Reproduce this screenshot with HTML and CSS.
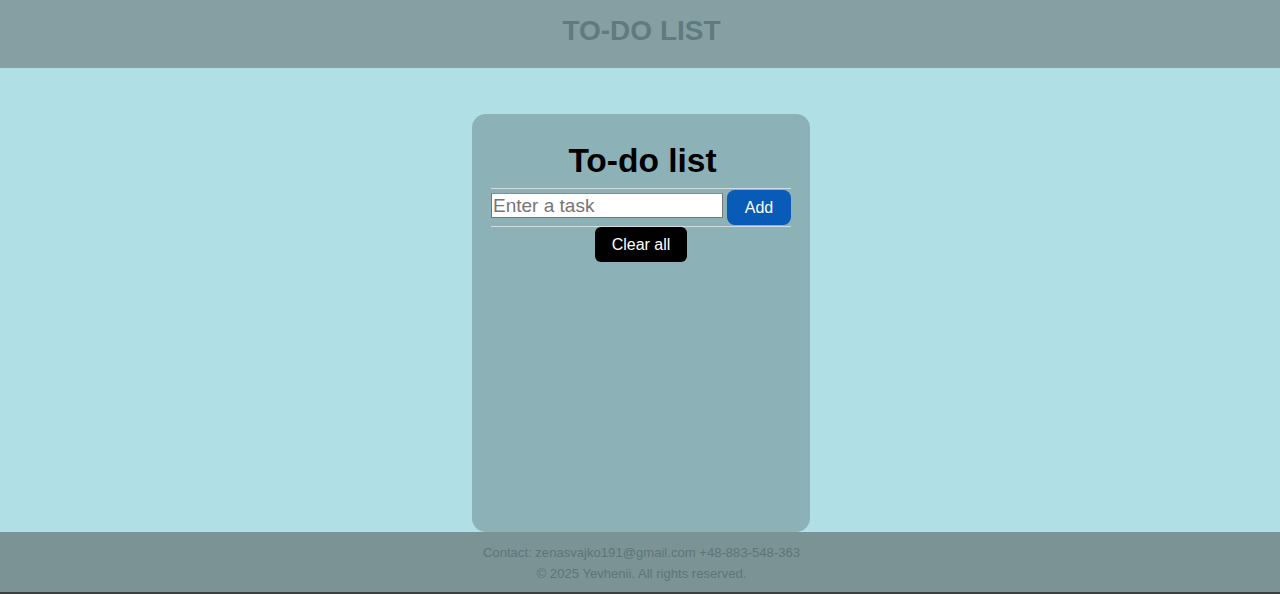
FILE: index.html
```html
<!DOCTYPE html>
<html lang="en">
<head>
<meta charset="UTF-8">
<title>To-do list</title>
<link rel="stylesheet" href="styles.css">
</head>
<body>
<header class="site-header">
  <h2 class="site-title">TO-DO LIST</h2>
</header>
<main class="main">
  <section class="card">
    <h1 class="card-title">To-do list</h1>
    <form class="task-form" onsubmit="return false;">
      <input class="task-input" type="text" placeholder="Enter a task">
      <button class="btn btn-add" type="submit">Add</button>
    </form>
    <button class="btn btn-clear" type="button">Clear all</button>
    <ul class="task-list"></ul>
  </section>
</main>
<footer class="site-footer">
  <p class="footer-line">Contact: zenasvajko191@gmail.com +48-883-548-363</p>
  <p class="footer-line">© 2025 Yevhenii. All rights reserved.</p>
</footer>
</body>
</html>
```
FILE: styles.css
```css
html, body {
  margin: 0;
  padding: 0;
}
body {
  font-family: "Liberation Sans", Arial, sans-serif;
  background: #b0dfe5;
  display: flex;
  flex-direction: column;
  height: 594px;
  box-sizing: border-box;
  border-bottom: 2px solid #3a3f40;
}
.site-header {
  height: 68px;
  box-sizing: border-box;
  padding-bottom: 6px;
  background: #869fa3;
  display: flex;
  align-items: center;
  justify-content: center;
  flex: none;
}
.site-title {
  margin: 0;
  font-size: 28px;
  font-weight: bold;
  color: #5f7b80;
  padding-left: 3px;
}
.main {
  flex: 1;
  display: flex;
  justify-content: center;
  align-items: flex-end;
  padding-left: 2px;
}
.card {
  width: 338px;
  height: 418px;
  box-sizing: border-box;
  background: #8cb1b7;
  border-radius: 14px;
  padding: 28px 19px 0;
  display: flex;
  flex-direction: column;
  align-items: center;
}
.card-title {
  margin: 0 0 0 3px;
  font-size: 33.5px;
  line-height: 38px;
  font-weight: bold;
  color: #000;
}
.task-form {
  margin-top: 8px;
  width: 300px;
  border-top: 1px solid #d4dcdd;
  border-bottom: 1px solid #d4dcdd;
  padding: 1px 0 0;
  display: flex;
  align-items: flex-start;
  gap: 4px;
  height: 39px;
  box-sizing: border-box;
}
.task-input {
  width: 232px;
  height: 25px;
  box-sizing: border-box;
  margin: 3px 0 0;
  padding: 0 1px;
  border: 1px solid #767676;
  border-top-color: #8a8a8a;
  background: #fff;
  font-family: "Liberation Sans", Arial, sans-serif;
  font-size: 19px;
  color: #000;
}
.task-input::placeholder {
  color: #757575;
}
.btn {
  border: none;
  color: #fff;
  font-family: "Liberation Sans", Arial, sans-serif;
  font-size: 16px;
  height: 35px;
  cursor: pointer;
  padding: 0;
}
.btn-add {
  width: 64px;
  background: #085bb6;
  border-radius: 8px;
}
.btn-clear {
  width: 92px;
  background: #000;
  border-radius: 6px;
}
.task-list {
  margin: 0;
  padding: 0;
  list-style: none;
}
.site-footer {
  flex: none;
  height: 60px;
  box-sizing: border-box;
  background: #7b9395;
  padding: 10px 0 0 3px;
  text-align: center;
}
.footer-line {
  margin: 0;
  font-size: 13.1px;
  line-height: 21px;
  color: #5d7579;
}
```
